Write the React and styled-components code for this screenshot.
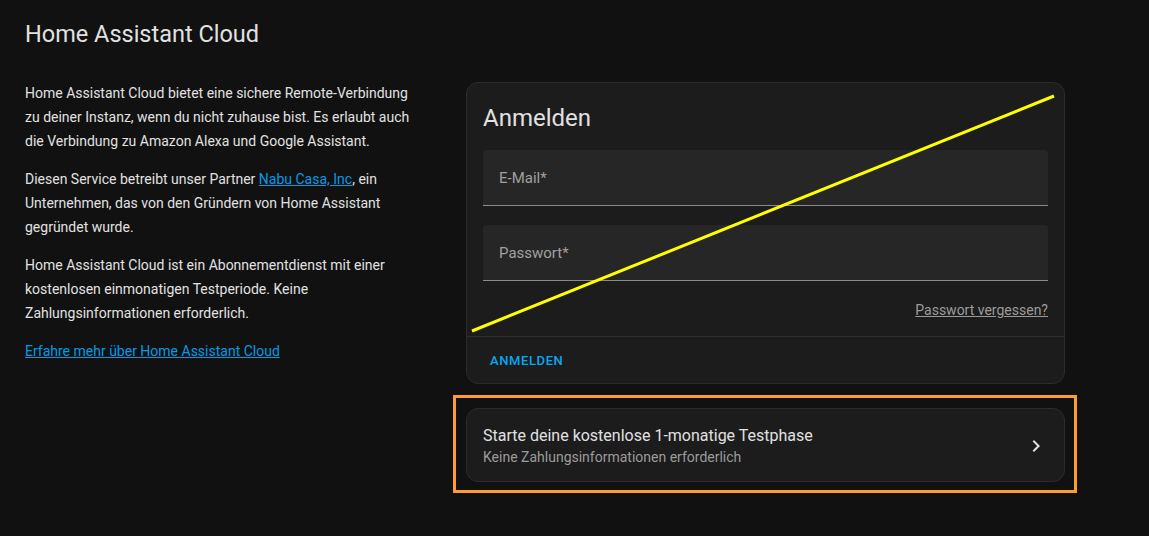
import React from 'react';
import styled, { createGlobalStyle } from 'styled-components';

const GlobalStyle = createGlobalStyle`
  html, body {
    margin: 0;
    padding: 0;
    background: #111111;
  }
  body {
    font-family: Roboto, "Noto Sans", "Liberation Sans", sans-serif;
    color: #e1e1e1;
    -webkit-font-smoothing: antialiased;
  }
`;

const Page = styled.div`
  position: relative;
  min-height: 536px;
  padding: 18px 0 0 25px;
  box-sizing: border-box;
`;

const Title = styled.h1`
  margin: 0;
  font-size: 23.5px;
  line-height: 32px;
  font-weight: 400;
  color: #e1e1e1;
`;

const Section = styled.div`
  display: flex;
  gap: 41px;
  margin-top: 17px;
`;

const Intro = styled.div`
  width: 400px;
  flex: none;
`;

const Para = styled.p`
  margin: 14px 0;
  font-size: 14px;
  line-height: 24px;
  color: #e1e1e1;
`;

const Link = styled.a`
  color: #039be5;
  text-decoration: underline;
  cursor: pointer;
`;

const Content = styled.div`
  width: 599px;
  flex: none;
  padding-top: 15px;
  display: flex;
  flex-direction: column;
  gap: 24px;
`;

const Card = styled.div`
  background: #1c1c1c;
  border: 1px solid #2c2c2c;
  border-radius: 12px;
  box-sizing: border-box;
`;

const CardHeader = styled.div`
  padding: 19px 16px 16px;
  font-size: 24px;
  line-height: 32px;
  color: #e1e1e1;
`;

const Fields = styled.div`
  padding: 0 16px;
  display: flex;
  flex-direction: column;
  gap: 19px;
`;

const Field = styled.div`
  height: 56px;
  background: #262626;
  border-radius: 4px 4px 0 0;
  border-bottom: 1px solid #8c8c8c;
  box-sizing: border-box;
  display: flex;
  align-items: center;
  padding: 0 16px;
  font-size: 15px;
  color: #a0a0a0;
`;

const ForgotRow = styled.div`
  display: flex;
  justify-content: flex-end;
  padding: 19px 16px 16px;
`;

const Forgot = styled.a`
  font-size: 14px;
  line-height: 20px;
  color: #9b9b9b;
  text-decoration: underline;
  cursor: pointer;
`;

const Actions = styled.div`
  border-top: 1px solid #2e2e2e;
  padding: 5px 8px;
`;

const Button = styled.button`
  height: 36px;
  padding: 0 15px;
  background: transparent;
  border: none;
  font-family: inherit;
  font-size: 13px;
  font-weight: 500;
  letter-spacing: 0.6px;
  text-transform: uppercase;
  color: #03a9f4;
  cursor: pointer;
`;

const TrialRow = styled.div`
  display: flex;
  align-items: center;
  padding: 16px 16px 14px;
  cursor: pointer;
`;

const TrialText = styled.div`
  flex: 1;
  display: flex;
  flex-direction: column;
`;

const Primary = styled.span`
  font-size: 16px;
  line-height: 22px;
  color: #e1e1e1;
`;

const Secondary = styled.span`
  font-size: 14px;
  line-height: 20px;
  color: #9b9b9b;
`;

const Chevron = styled.svg`
  width: 24px;
  height: 24px;
  fill: #e1e1e1;
  flex: none;
`;

const Annotations = styled.svg`
  position: absolute;
  left: 0;
  top: 0;
  width: 1149px;
  height: 536px;
  pointer-events: none;
`;

export default function App() {
  return (
    <>
      <GlobalStyle />
      <Page>
        <Title>Home Assistant Cloud</Title>
        <Section>
          <Intro>
            <Para>
              Home Assistant Cloud bietet eine sichere Remote-Verbindung zu deiner Instanz, wenn du
              nicht zuhause bist. Es erlaubt auch die Verbindung zu Amazon Alexa und Google Assistant.
            </Para>
            <Para>
              Diesen Service betreibt unser Partner <Link>Nabu Casa, Inc</Link>, ein Unternehmen, das
              von den Gründern von Home Assistant gegründet wurde.
            </Para>
            <Para>
              Home Assistant Cloud ist ein Abonnementdienst mit einer kostenlosen einmonatigen
              Testperiode. Keine Zahlungsinformationen erforderlich.
            </Para>
            <Para>
              <Link>Erfahre mehr über Home Assistant Cloud</Link>
            </Para>
          </Intro>
          <Content>
            <Card>
              <CardHeader>Anmelden</CardHeader>
              <Fields>
                <Field>E-Mail*</Field>
                <Field>Passwort*</Field>
              </Fields>
              <ForgotRow>
                <Forgot>Passwort vergessen?</Forgot>
              </ForgotRow>
              <Actions>
                <Button>Anmelden</Button>
              </Actions>
            </Card>
            <Card>
              <TrialRow>
                <TrialText>
                  <Primary>Starte deine kostenlose 1-monatige Testphase</Primary>
                  <Secondary>Keine Zahlungsinformationen erforderlich</Secondary>
                </TrialText>
                <Chevron viewBox="0 0 24 24">
                  <path d="M8.59,16.58L13.17,12L8.59,7.41L10,6L16,12L10,18L8.59,16.58Z" />
                </Chevron>
              </TrialRow>
            </Card>
          </Content>
        </Section>
        <Annotations viewBox="0 0 1149 536">
          <line x1="472" y1="331" x2="1054" y2="96" stroke="#ffff00" strokeWidth="3" />
          <rect x="454.5" y="396.5" width="621" height="95" fill="none" stroke="#ff9e2f" strokeWidth="3" />
        </Annotations>
      </Page>
    </>
  );
}
